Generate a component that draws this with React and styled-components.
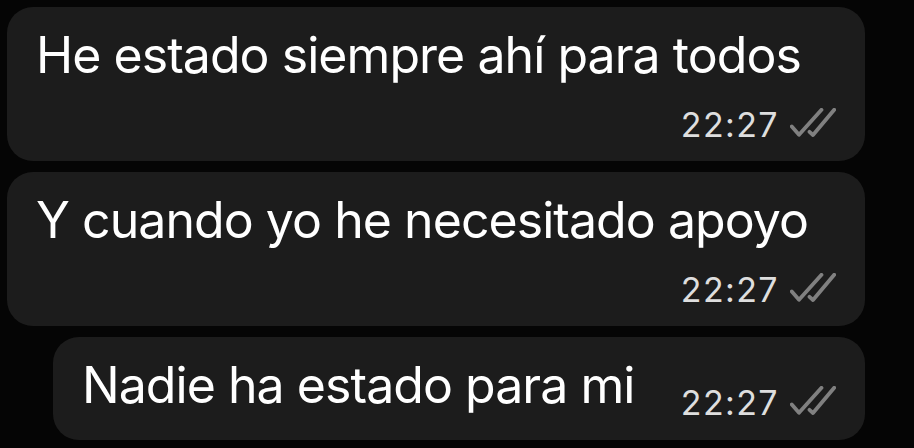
import React from "react";
import styled, { createGlobalStyle } from "styled-components";

const Global = createGlobalStyle`
  html, body {
    margin: 0;
    padding: 0;
    background: #050505;
  }
  body {
    font-family: Inter, "Noto Sans", "Liberation Sans", sans-serif;
    -webkit-font-smoothing: antialiased;
  }
`;

const Thread = styled.div`
  display: flex;
  flex-direction: column;
  gap: 11px;
  padding: 7px 49px 8px 7px;
  width: 914px;
  height: 448px;
  box-sizing: border-box;
  background: #050505;
  overflow: hidden;
`;

const Bubble = styled.div`
  display: flex;
  flex-direction: ${(p) => (p.$inline ? "row" : "column")};
  align-items: ${(p) => (p.$inline ? "flex-end" : "stretch")};
  justify-content: ${(p) => (p.$inline ? "space-between" : "flex-start")};
  margin-left: ${(p) => (p.$indent ? `${p.$indent}px` : "0")};
  padding: ${(p) => (p.$inline ? "18px 29px 17px 29px" : "18px 29px 16px 29px")};
  background: #1c1c1c;
  border-radius: 26px;
`;

const Text = styled.div`
  color: #ffffff;
  font-size: 50px;
  line-height: 60px;
  letter-spacing: -0.95px;
  white-space: nowrap;
  margin-bottom: ${(p) => (p.$lift ? `${p.$lift}px` : "0")};
`;

const Meta = styled.div`
  display: flex;
  align-items: center;
  align-self: flex-end;
  gap: 11px;
  margin-top: ${(p) => (p.$gap ? `${p.$gap}px` : "0")};
  height: 40px;
`;

const Time = styled.span`
  color: #dedede;
  font-size: 34px;
  line-height: 40px;
  letter-spacing: 1.4px;
`;

const Ticks = styled.svg`
  width: 46px;
  height: 30px;
  margin-top: -4px;
  flex: none;
`;

const ReadTicks = () => (
  <Ticks viewBox="0 0 46 30" fill="none">
    <path
      d="M1.8 18.5 L9 26.8 L31.5 1.8"
      stroke="#808080"
      strokeWidth="3.8"
      strokeLinecap="round"
      strokeLinejoin="round"
    />
    <path
      d="M19.5 23.8 L23 27 L44.2 1.8"
      stroke="#808080"
      strokeWidth="3.8"
      strokeLinecap="round"
      strokeLinejoin="round"
    />
  </Ticks>
);

const messages = [
  { text: "He estado siempre ahí para todos", time: "22:27" },
  { text: "Y cuando yo he necesitado apoyo", time: "22:27" },
  { text: "Nadie ha estado para mi", time: "22:27", inline: true, indent: 46 },
];

export default function App() {
  return (
    <>
      <Global />
      <Thread>
        {messages.map((m, i) =>
          m.inline ? (
            <Bubble key={i} $inline $indent={m.indent}>
              <Text $lift={8}>{m.text}</Text>
              <Meta>
                <Time>{m.time}</Time>
                <ReadTicks />
              </Meta>
            </Bubble>
          ) : (
            <Bubble key={i}>
              <Text>{m.text}</Text>
              <Meta $gap={20}>
                <Time>{m.time}</Time>
                <ReadTicks />
              </Meta>
            </Bubble>
          )
        )}
      </Thread>
    </>
  );
}
